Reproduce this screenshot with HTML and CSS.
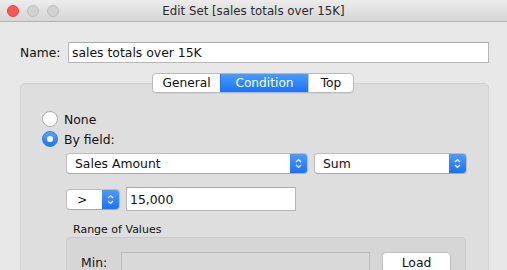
FILE: index.html
```html
<!DOCTYPE html>
<html>
<head>
<meta charset="utf-8">
<link rel="stylesheet" href="styles.css">
</head>
<body>
<div class="window">
  <div class="titlebar">
    <div class="lights">
      <span class="light red"></span>
      <span class="light"></span>
      <span class="light"></span>
    </div>
    <div class="title">Edit Set [sales totals over 15K]</div>
    <div></div>
  </div>

  <div class="name-row">
    <label class="name-label">Name:</label>
    <div class="textfield name-field">sales totals over 15K</div>
  </div>

  <div class="tabs">
    <div class="seg">
      <span class="tab">General</span>
      <span class="tab active">Condition</span>
      <span class="tab">Top</span>
    </div>
  </div>

  <div class="panel">
    <div class="radio-row"><span class="radio"></span><span>None</span></div>
    <div class="radio-row"><span class="radio checked"></span><span>By field:</span></div>

    <div class="row field-row">
      <div class="select sel-field"><span class="sel-text">Sales Amount</span><span class="arrow"><svg width="7" height="11" viewBox="0 0 7 11"><path d="M1 4 L3.5 1.5 L6 4 M1 7 L3.5 9.5 L6 7" fill="none" stroke="#fff" stroke-width="1.2"/></svg></span></div>
      <div class="select sel-agg"><span class="sel-text">Sum</span><span class="arrow"><svg width="7" height="11" viewBox="0 0 7 11"><path d="M1 4 L3.5 1.5 L6 4 M1 7 L3.5 9.5 L6 7" fill="none" stroke="#fff" stroke-width="1.2"/></svg></span></div>
    </div>

    <div class="row cond-row">
      <div class="select sel-op"><span class="sel-text">&gt;</span><span class="arrow"><svg width="7" height="11" viewBox="0 0 7 11"><path d="M1 4 L3.5 1.5 L6 4 M1 7 L3.5 9.5 L6 7" fill="none" stroke="#fff" stroke-width="1.2"/></svg></span></div>
      <div class="textfield value-field">15,000</div>
    </div>

    <div class="range-label">Range of Values</div>
    <div class="range-box">
      <div class="min-row">
        <span class="min-label">Min:</span>
        <div class="textfield disabled min-field"></div>
        <button class="btn">Load</button>
      </div>
    </div>
  </div>
</div>
</body>
</html>
```

FILE: styles.css
```css
* { box-sizing: border-box; }
html, body {
  margin: 0;
  padding: 0;
  width: 507px;
  height: 270px;
  overflow: hidden;
  background: #e8e8e8;
  font-family: "DejaVu Sans", sans-serif;
  color: #111;
}
.window { width: 507px; height: 270px; overflow: hidden; }

.titlebar {
  height: 22px;
  display: grid;
  grid-template-columns: 1fr auto 1fr;
  align-items: center;
  background: linear-gradient(#ececec, #d6d6d6);
  border-bottom: 1px solid #b3b3b3;
}
.lights { display: flex; gap: 8px; padding-left: 7px; }
.light {
  width: 12px; height: 12px; border-radius: 50%;
  background: #d2d2d2;
  border: 1px solid #bdbdbd;
}
.light.red { background: #fc5753; border-color: #df4744; }
.title {
  font-size: 11.8px;
  color: #2a2a2a;
  padding-top: 1px;
}

.name-row {
  display: flex;
  align-items: center;
  margin-top: 20px;
  padding: 0 18px 0 20px;
  height: 21px;
}
.name-label { width: 48px; font-size: 12.3px; }
.textfield {
  background: #fff;
  border: 1px solid #b7b7b7;
  border-top-color: #a9a9a9;
  font-size: 12.4px;
  display: flex;
  align-items: center;
  padding-left: 3px;
}
.name-field { flex: 1; height: 21px; }

.tabs {
  display: flex;
  justify-content: center;
  margin-top: 10px;
  margin-bottom: -10px;
  position: relative;
  z-index: 1;
  padding-right: 1px;
}
.seg {
  display: flex;
  height: 20px;
  border: 1px solid #b9b9b9;
  border-radius: 4px;
  background: #fff;
  overflow: hidden;
  box-shadow: 0 1px 0 rgba(0,0,0,0.05);
}
.tab {
  font-size: 12.2px;
  display: flex;
  align-items: center;
  justify-content: center;
  border-left: 1px solid #c6c6c6;
}
.tab:first-child { border-left: none; width: 67px; }
.tab:nth-child(2) { width: 88px; }
.tab:nth-child(3) { width: 45px; }
.tab.active {
  background: linear-gradient(#4b9afc, #1a73f7);
  color: #fff;
  border-left-color: #1a73f7;
}

.panel {
  margin: 0 18px 0 20px;
  height: 200px;
  background: #dedede;
  border: 1px solid #d2d2d2;
  border-radius: 5px;
  padding: 25px 0 0 21px;
}
.radio-row {
  display: flex;
  align-items: center;
  height: 20px;
  gap: 6px;
  font-size: 12.4px;
}
.radio {
  width: 16px; height: 16px; border-radius: 50%;
  background: #fff;
  border: 1px solid #a9a9a9;
  display: flex; align-items: center; justify-content: center;
}
.radio.checked {
  background: linear-gradient(#5aa2fb, #1f77f6);
  border-color: #2a79e8;
}
.radio.checked::after {
  content: "";
  width: 6px; height: 6px; border-radius: 50%;
  background: #fff;
}

.row { display: flex; align-items: center; padding-left: 24px; }
.field-row { margin-top: 4px; height: 21px; gap: 6px; }
.cond-row { margin-top: 13px; height: 24px; gap: 6px; }

.select {
  height: 21px;
  display: flex;
  align-items: stretch;
  background: #fff;
  border: 1px solid #bdbdbd;
  border-bottom-color: #a8a8a8;
  border-radius: 4px;
  overflow: hidden;
  font-size: 12.4px;
}
.sel-text { flex: 1; display: flex; align-items: center; padding-left: 8px; }
.arrow {
  width: 17px;
  display: flex; align-items: center; justify-content: center;
  background: linear-gradient(#4d9bfc, #1a73f7);
}
.sel-field { width: 242px; }
.sel-agg { width: 153px; }
.sel-op { width: 54px; }
.sel-op .sel-text { padding-left: 10px; }
.value-field { width: 170px; height: 24px; padding-left: 3px; }

.range-label {
  margin-top: 12px;
  padding-left: 31px;
  font-size: 11px;
  height: 14px;
  line-height: 14px;
}
.range-box {
  margin-left: 24px;
  width: 400px;
  height: 60px;
  background: #d6d6d6;
  border: 1px solid #cbcbcb;
  border-radius: 4px;
  padding: 14px 0 0 14px;
}
.min-row { display: flex; align-items: center; height: 21px; }
.min-label { width: 40px; font-size: 12.4px; }
.textfield.disabled {
  background: #d9d9d9;
  border-color: #bcbcbc;
}
.min-field { width: 249px; height: 21px; }
.btn {
  margin-left: 12px;
  width: 69px;
  height: 21px;
  background: #fff;
  border: 1px solid #bdbdbd;
  border-radius: 4px;
  font-family: "DejaVu Sans", sans-serif;
  font-size: 12.4px;
  color: #111;
  padding: 0;
}
```
